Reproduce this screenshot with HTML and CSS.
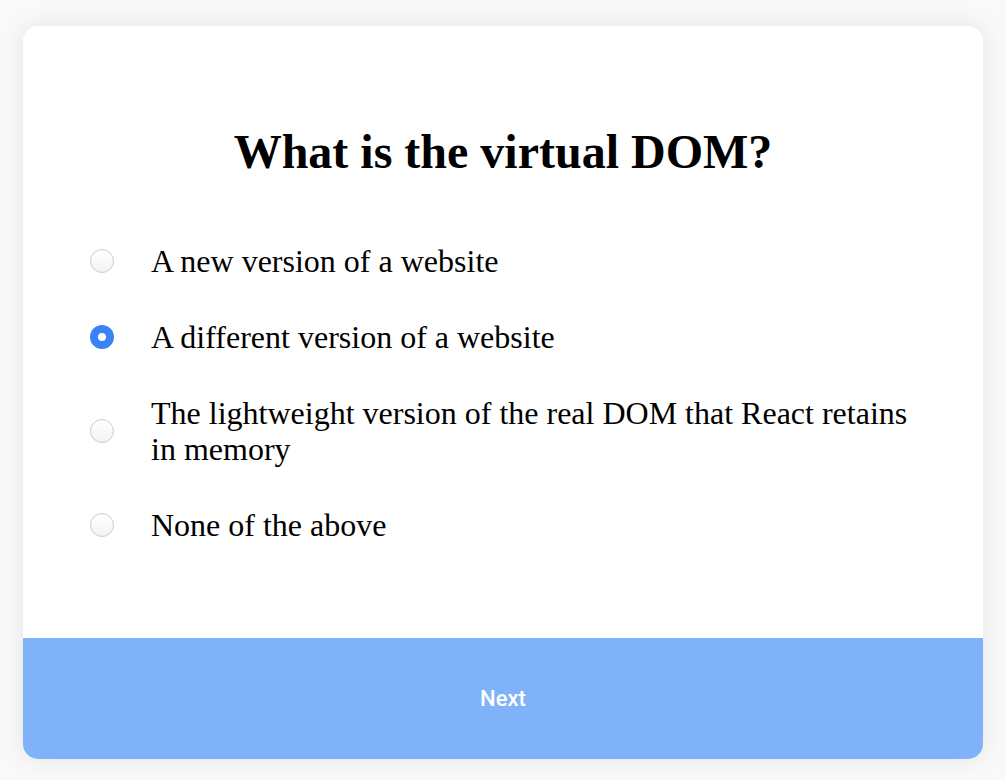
FILE: index.html
```html
<!DOCTYPE html>
<html lang="en">
<head>
<meta charset="utf-8">
<title>Quiz</title>
<link rel="stylesheet" href="styles.css">
</head>
<body>
<div class="card">
  <div class="card-body">
    <h1 class="question">What is the virtual DOM?</h1>
    <ul class="options">
      <li class="option"><span class="radio"></span><span class="label">A new version of a website</span></li>
      <li class="option"><span class="radio checked"></span><span class="label">A different version of a website</span></li>
      <li class="option"><span class="radio"></span><span class="label">The lightweight version of the real DOM that React retains in memory</span></li>
      <li class="option"><span class="radio"></span><span class="label">None of the above</span></li>
    </ul>
  </div>
  <button class="next">Next</button>
</div>
</body>
</html>
```
FILE: styles.css
```css
html, body {
  margin: 0;
  padding: 0;
}
body {
  background: #f9f9f9;
  padding: 26px 23px 21px 23px;
  font-family: "Liberation Serif", "Times New Roman", serif;
  color: #000;
}
.card {
  width: 960px;
  height: 733px;
  background: #fff;
  border-radius: 15px;
  box-shadow: 0 0 24px rgba(0, 0, 0, 0.09);
  display: flex;
  flex-direction: column;
  overflow: hidden;
}
.card-body {
  flex: 1;
  padding: 98px 67px 0 67px;
}
.question {
  margin: 0;
  font-size: 48px;
  line-height: 55px;
  font-weight: bold;
  text-align: center;
}
.options {
  list-style: none;
  margin: 64px 0 0 0;
  padding: 0;
  display: flex;
  flex-direction: column;
  gap: 40px;
}
.option {
  display: flex;
  align-items: center;
  gap: 37px;
  font-size: 32px;
  line-height: 36px;
}
.radio {
  flex: none;
  width: 24px;
  height: 24px;
  box-sizing: border-box;
  border-radius: 50%;
  border: 1px solid #cccccc;
  background: linear-gradient(#ffffff, #f3f3f3);
}
.radio.checked {
  border: 8px solid #3a83f7;
  background: #fff;
}
.label {
  flex: 1;
}
.next {
  flex: none;
  height: 121px;
  border: none;
  background: #80b2f9;
  color: #fff;
  font-family: Roboto, "Liberation Sans", Arial, sans-serif;
  font-weight: 500;
  font-size: 22px;
  padding: 0;
  margin: 0;
}
```
